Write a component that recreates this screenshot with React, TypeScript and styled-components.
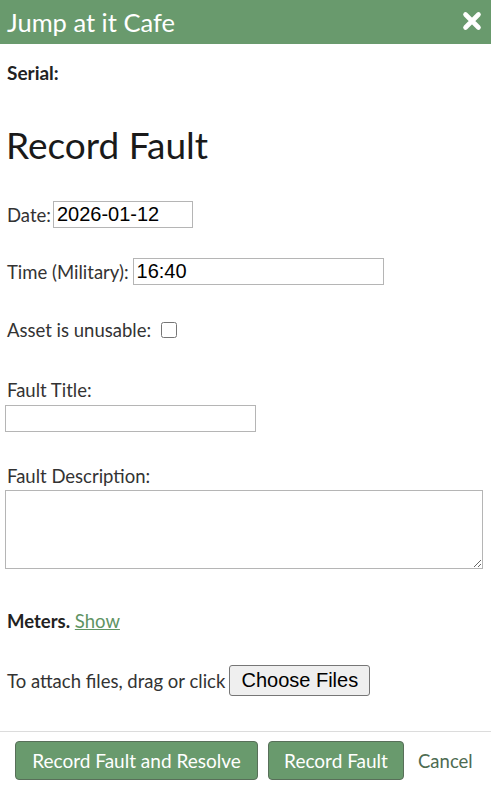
import React from 'react';
import styled, { createGlobalStyle } from 'styled-components';

const GlobalStyle = createGlobalStyle`
  body {
    margin: 0;
    background: #fff;
    font-family: Lato, "Open Sans", sans-serif;
    color: #222;
  }
`;

export default function App() {
  return (
    <>
      <GlobalStyle />
      <Dialog>
        <Header>
          <Title>Jump at it Cafe</Title>
          <CloseButton aria-label="Close">
            <svg width="20" height="20" viewBox="0 0 20 20">
              <path d="M3.5 3.5 L16.5 16.5 M16.5 3.5 L3.5 16.5" stroke="#fff" strokeWidth="4.6" strokeLinecap="round" />
            </svg>
          </CloseButton>
        </Header>
        <Body>
          <Serial>Serial:</Serial>
          <Heading>Record Fault</Heading>
          <Row $mt={34} $gap={2}>
            <Label>Date:</Label>
            <TextInput $w={140} defaultValue="2026-01-12" />
          </Row>
          <Row $mt={30}>
            <Label>Time (Military):</Label>
            <TextInput $w={251} defaultValue="16:40" />
          </Row>
          <Row $mt={35}>
            <Label>Asset is unusable:</Label>
            <Checkbox type="checkbox" />
          </Row>
          <FieldLabel $mt={40}>Fault Title:</FieldLabel>
          <TextInput $w={251} $mt={5} />
          <FieldLabel $mt={34}>Fault Description:</FieldLabel>
          <TextArea />
          <Meters>
            <b>Meters.</b> <ShowLink href="#">Show</ShowLink>
          </Meters>
          <Row $mt={34}>
            <Label>To attach files, drag or click</Label>
            <FileButton type="button">Choose Files</FileButton>
          </Row>
        </Body>
        <Divider />
        <Footer>
          <PrimaryButton $w={243}>Record Fault and Resolve</PrimaryButton>
          <PrimaryButton $w={136}>Record Fault</PrimaryButton>
          <CancelLink href="#">Cancel</CancelLink>
        </Footer>
      </Dialog>
    </>
  );
}

const Dialog = styled.div`
  display: flex;
  flex-direction: column;
  width: 491px;
  min-height: 790px;
`;

const Header = styled.div`
  display: flex;
  align-items: center;
  justify-content: space-between;
  height: 44px;
  padding: 0 9px 0 7px;
  background: #699a6d;
  color: #fff;
`;

const Title = styled.div`
  font-size: 25.5px;
  line-height: 44px;
`;

const CloseButton = styled.span`
  display: flex;
  margin-top: -3px;
`;

const Body = styled.div`
  display: flex;
  flex-direction: column;
  align-items: flex-start;
  padding: 0 5px;
`;

const Serial = styled.div`
  margin-top: 19px;
  padding-left: 2px;
  font-size: 19px;
  line-height: 20px;
  font-weight: bold;
`;

const Heading = styled.h1`
  margin: 40px 0 0;
  padding-left: 1px;
  font-size: 37px;
  line-height: 44px;
  font-weight: normal;
  color: #1a1a1a;
`;

const Row = styled.div<{ $mt: number; $gap?: number }>`
  display: flex;
  align-items: center;
  gap: ${(p) => p.$gap ?? 4}px;
  margin-top: ${(p) => p.$mt}px;
  padding-left: 2px;
`;

const Label = styled.span`
  font-size: 18.5px;
  line-height: 20px;
  color: #333;
`;

const FieldLabel = styled.div<{ $mt: number }>`
  margin-top: ${(p) => p.$mt}px;
  padding-left: 2px;
  font-size: 18.5px;
  line-height: 20px;
  color: #333;
`;

const TextInput = styled.input<{ $w: number; $mt?: number }>`
  box-sizing: border-box;
  width: ${(p) => p.$w}px;
  height: 27px;
  margin: ${(p) => p.$mt ?? 0}px 0 0;
  padding: 0 3px;
  border: 1px solid #b5b5b5;
  font-family: "Liberation Sans", Arial, sans-serif;
  font-size: 20px;
  color: #000;
  outline: none;
`;

const Checkbox = styled.input`
  width: 16px;
  height: 16px;
  margin: 0 0 0 6px;
`;

const TextArea = styled.textarea`
  box-sizing: border-box;
  width: 478px;
  height: 79px;
  margin-top: 4px;
  border: 1px solid #b5b5b5;
  outline: none;
`;

const Meters = styled.div`
  margin-top: 42px;
  padding-left: 2px;
  font-size: 18.5px;
  line-height: 20px;
  color: #222;
`;

const ShowLink = styled.a`
  color: #5f9463;
  text-decoration: underline;
`;

const FileButton = styled.button`
  box-sizing: border-box;
  width: 141px;
  height: 31px;
  border: 1px solid #767676;
  border-radius: 3px;
  background: #efefef;
  font-family: "Liberation Sans", Arial, sans-serif;
  font-size: 20px;
  color: #000;
`;

const Divider = styled.hr`
  width: 100%;
  margin: 35px 0 0;
  border: none;
  border-top: 1px solid #dcdcdc;
`;

const Footer = styled.div`
  display: flex;
  align-items: center;
  gap: 10px;
  margin-top: 9px;
  padding-left: 15px;
`;

const PrimaryButton = styled.button<{ $w: number }>`
  box-sizing: border-box;
  width: ${(p) => p.$w}px;
  height: 39px;
  border: 1px solid #586f59;
  border-radius: 4px;
  background: #699a6d;
  color: #fff;
  font-family: Lato, "Open Sans", sans-serif;
  font-size: 19px;
`;

const CancelLink = styled.a`
  margin-left: 4px;
  font-size: 18.5px;
  color: #4d6b51;
  text-decoration: none;
`;
